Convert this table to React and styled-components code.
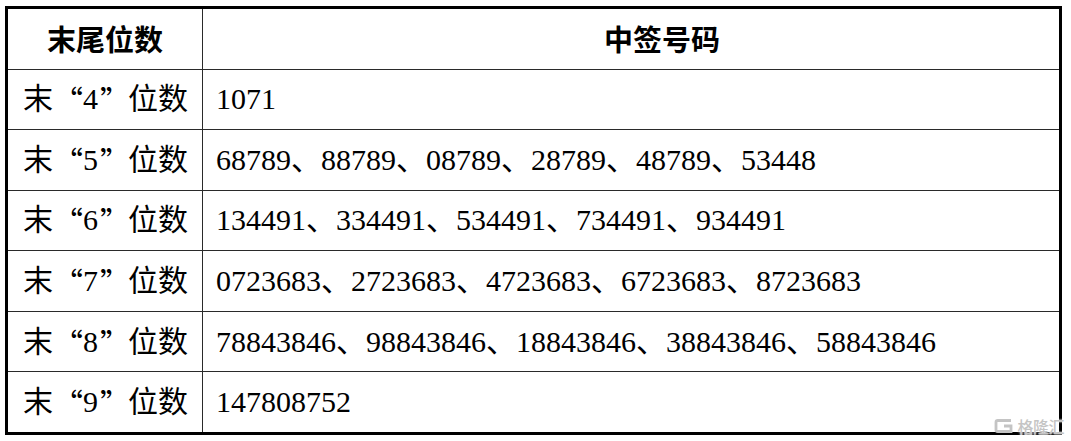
import React from "react";
import styled, { createGlobalStyle } from "styled-components";

const Global = createGlobalStyle`
  html, body {
    margin: 0;
    padding: 0;
    background: #fff;
  }
  body {
    font-family: "Liberation Serif", "Noto Sans CJK SC", serif;
    color: #000;
  }
`;

const Page = styled.div`
  position: relative;
  width: 1071px;
  height: 441px;
  padding: 6px 0 0 5px;
  box-sizing: border-box;
`;

const Frame = styled.div`
  width: 1057px;
  height: 429px;
  box-sizing: border-box;
  border: 3px solid #000;
  display: grid;
  grid-template-columns: 194px 1fr;
  grid-template-rows: repeat(7, 1fr);
  gap: 1px;
  background: #2a2a2a;
`;

const Cell = styled.div`
  background: #fff;
  display: flex;
  align-items: center;
  justify-content: ${(p) => (p.$head ? "center" : "flex-start")};
  padding: 0 0 0 ${(p) => p.$indent ?? 13}px;
  font-family: ${(p) =>
    p.$head
      ? `"Noto Sans CJK SC", sans-serif`
      : `"Liberation Serif", "Noto Sans CJK SC", serif`};
  font-weight: ${(p) => (p.$head ? 700 : 400)};
  font-size: ${(p) => (p.$head ? "29px" : "30px")};
  white-space: nowrap;
  line-height: 1;
`;

const Quote = styled.span`
  display: inline-block;
  width: 1em;
  text-align: ${(p) => (p.$open ? "right" : "left")};
  padding: ${(p) => (p.$open ? "0 3px 0 0" : "0 0 0 2px")};
  box-sizing: border-box;
  font-family: "Noto Sans CJK SC", sans-serif;
`;

const Watermark = styled.div`
  position: absolute;
  right: 7px;
  bottom: 7px;
  display: flex;
  align-items: center;
  gap: 3px;
  color: #c4c4c4;
  font-family: "Noto Sans CJK SC", sans-serif;
  font-weight: 500;
  font-size: 16px;
  letter-spacing: -0.5px;
  line-height: 1;
  text-shadow: 0 0 2px #fff, 0 0 2px #fff;
`;

const rows = [
  ["4", ["1071"]],
  ["5", ["68789", "88789", "08789", "28789", "48789", "53448"]],
  ["6", ["134491", "334491", "534491", "734491", "934491"]],
  ["7", ["0723683", "2723683", "4723683", "6723683", "8723683"]],
  ["8", ["78843846", "98843846", "18843846", "38843846", "58843846"]],
  ["9", ["147808752"]],
];

const Logo = () => (
  <svg width="20" height="16" viewBox="0 0 20 16">
    <path
      d="M17 2.5 H3.8 Q2 2.5 2 4.3 V11.7 Q2 13.5 3.8 13.5 H17 V8 H10"
      fill="none"
      stroke="#c4c4c4"
      strokeWidth="2.8"
    />
  </svg>
);

export default function App() {
  return (
    <Page>
      <Global />
      <Frame>
        <Cell $head $indent={0}>
          末尾位数
        </Cell>
        <Cell $head $indent={62}>
          中签号码
        </Cell>
        {rows.map(([n, nums]) => (
          <React.Fragment key={n}>
            <Cell $indent={15}>
              末<Quote $open>“</Quote>
              {n}
              <Quote>”</Quote>位数
            </Cell>
            <Cell>{nums.join("、")}</Cell>
          </React.Fragment>
        ))}
      </Frame>
      <Watermark>
        <Logo />
        格隆汇
      </Watermark>
    </Page>
  );
}
